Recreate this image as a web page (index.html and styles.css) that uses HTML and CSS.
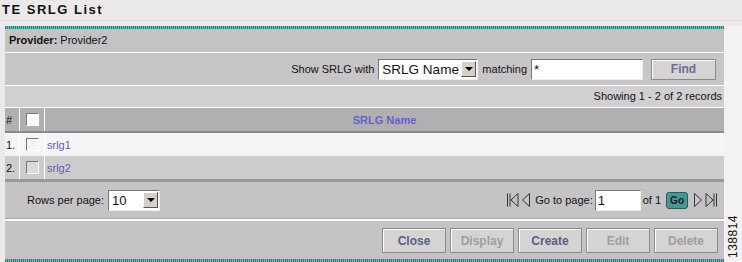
FILE: index.html
```html
<!DOCTYPE html>
<html>
<head>
    <title>TE SRLG List</title>
    <link rel="stylesheet" href="styles.css">
</head>
<body>
    <div class="title">TE SRLG List</div>
    <div class="page">
        <div class="panel">
            <div class="teal"></div>
            <div class="provider"><b>Provider:</b> Provider2</div>
            <div class="filter">
                <span>Show SRLG with</span>
                <span class="select wide"><span class="val">SRLG Name</span><span class="arrow"></span></span>
                <span>matching</span>
                <span class="textbox search">*</span>
                <span class="btn find">Find</span>
            </div>
            <div class="showing">Showing 1 - 2 of 2 records</div>
            <table class="list">
                <tr class="head">
                    <th class="num">#</th>
                    <th class="chk"><span class="box"></span></th>
                    <th class="name">SRLG Name</th>
                </tr>
                <tr class="odd">
                    <td class="num">1.</td>
                    <td class="chk"><span class="box"></span></td>
                    <td><a href="#">srlg1</a></td>
                </tr>
                <tr class="even">
                    <td class="num">2.</td>
                    <td class="chk"><span class="box"></span></td>
                    <td><a href="#">srlg2</a></td>
                </tr>
            </table>
            <div class="pager">
                <div class="rows">
                    <span>Rows per page:</span>
                    <span class="select small"><span class="val">10</span><span class="arrow"></span></span>
                </div>
                <div class="nav">
                    <svg width="13" height="16" viewBox="0 0 13 16"><path d="M1.5 1.5v13M4 1.5v13M12 1.5L5 8l7 6.5z" fill="none" stroke="#333" stroke-width="1"/></svg>
                    <svg width="10" height="16" viewBox="0 0 10 16"><path d="M8.5 1.5L1.5 8l7 6.5z" fill="none" stroke="#333" stroke-width="1"/></svg>
                    <span class="goto">Go to page:</span>
                    <span class="textbox page-in">1</span>
                    <span>of 1</span>
                    <span class="go">Go</span>
                    <svg width="10" height="16" viewBox="0 0 10 16"><path d="M1.5 1.5L8.5 8l-7 6.5z" fill="none" stroke="#333" stroke-width="1"/></svg>
                    <svg width="13" height="16" viewBox="0 0 13 16"><path d="M1 1.5L8 8l-7 6.5zM9 1.5v13M11.5 1.5v13" fill="none" stroke="#333" stroke-width="1"/></svg>
                </div>
            </div>
            <div class="actions">
                <span class="btn on">Close</span>
                <span class="btn off">Display</span>
                <span class="btn on">Create</span>
                <span class="btn off">Edit</span>
                <span class="btn off">Delete</span>
            </div>
            <div class="teal"></div>
        </div>
        <div class="side"><span class="figno">138814</span></div>
    </div>
</body>
</html>
```

FILE: styles.css
```css
body {
    margin: 0;
    background-color: #ece9ea;
    font-family: "Liberation Sans", Arial, sans-serif;
    font-size: 11px;
    color: #111;
}
.title {
    height: 21px;
    padding-left: 2px;
    font-size: 13px;
    font-weight: bold;
    letter-spacing: 1.5px;
    line-height: 20px;
    border-bottom: 1px solid #e2d8d8;
    box-sizing: border-box;
}
.page {
    display: flex;
    padding-left: 5px;
    padding-top: 5px;
}
.panel {
    width: 719px;
    background-color: #c5c3c5;
}
.side {
    flex: 1;
    display: flex;
    align-items: flex-end;
    justify-content: center;
    padding-bottom: 4px;
    background-color: #f3f1f2;
}
.figno {
    writing-mode: vertical-rl;
    transform: rotate(180deg);
    font-size: 12px;
    letter-spacing: 0.5px;
}
.teal {
    height: 3px;
    background: repeating-linear-gradient(90deg, #1f7f78 0 1px, #7fbcb4 1px 2px);
}
.provider {
    height: 23px;
    line-height: 23px;
    padding-left: 4px;
    background-color: #c4c2c4;
    border-bottom: 1px solid #fff;
}
.filter {
    height: 32px;
    display: flex;
    align-items: center;
    justify-content: flex-end;
    gap: 4px;
    padding-right: 8px;
    background-color: #c7c5c7;
    border-bottom: 1px solid #fff;
}
.select {
    display: flex;
    align-items: center;
    height: 21px;
    box-sizing: border-box;
    background: #fff;
    border: 1px solid #777;
    border-right-color: #eee;
    border-bottom-color: #eee;
    padding-left: 3px;
    padding-right: 1px;
    white-space: nowrap;
}
.select .val {
    flex: 1;
    overflow: hidden;
}
.select.wide {
    width: 100px;
    font-size: 13.5px;
}
.select.small {
    width: 52px;
    font-size: 13px;
}
.arrow {
    flex: none;
    width: 15px;
    height: 16px;
    box-sizing: border-box;
    background: #d4d0c8;
    border: 1px solid #fff;
    border-right-color: #555;
    border-bottom-color: #555;
    position: relative;
}
.arrow::after {
    content: "";
    position: absolute;
    left: 3px;
    top: 5px;
    border-left: 4px solid transparent;
    border-right: 4px solid transparent;
    border-top: 4px solid #000;
}
.textbox {
    display: inline-block;
    height: 21px;
    line-height: 19px;
    box-sizing: border-box;
    background: #fff;
    border: 1px solid #777;
    border-right-color: #eee;
    border-bottom-color: #eee;
    padding-left: 2px;
    font-size: 13px;
}
.search {
    width: 112px;
}
.btn {
    display: inline-flex;
    align-items: center;
    justify-content: center;
    box-sizing: border-box;
    background: #d6d4d2;
    border: 1px solid #8a8a8a;
    box-shadow: inset 1px 1px 0 #fff;
    font-weight: bold;
    font-size: 12px;
}
.find {
    width: 65px;
    height: 21px;
    margin-left: 4px;
    color: #6c6c98;
}
.showing {
    height: 21px;
    line-height: 21px;
    text-align: right;
    padding-right: 2px;
    background-color: #d1cfd1;
    border-bottom: 1px solid #fff;
}
.list {
    width: 100%;
    border-collapse: collapse;
}
.list th, .list td {
    padding: 0;
    height: 23px;
    text-align: left;
    font-weight: normal;
}
.list .head th {
    background-color: #b1afb1;
    border-bottom: 2px solid #8c8b8c;
}
.list .num {
    width: 13px;
    padding-left: 1px;
    border-right: 1px solid #fff;
}
.list .chk {
    width: 24px;
    border-right: 1px solid #fff;
}
.list th.name {
    text-align: center;
    font-weight: bold;
    color: #6464c8;
}
.list .odd td {
    background-color: #f6f4f6;
}
.list .even td {
    background-color: #cdcbcd;
}
.list td a {
    color: #6060b0;
    text-decoration: none;
    padding-left: 2px;
}
.box {
    display: block;
    width: 13px;
    height: 13px;
    margin-left: 6px;
    box-sizing: border-box;
    background: #fff;
    border: 1px solid #fff;
    border-top-color: #777;
    border-left-color: #777;
}
.odd .box {
    background: #f6f4f6;
}
.even .box {
    background: #dcdadc;
}
.pager {
    height: 36px;
    display: flex;
    align-items: center;
    justify-content: space-between;
    padding: 0 6px 0 22px;
    border-top: 3px solid #9a999a;
    border-bottom: 1px solid #ababab;
    box-shadow: 0 2px 0 #fff;
    margin-bottom: 3px;
}
.rows, .nav {
    display: flex;
    align-items: center;
    gap: 4px;
}
.nav {
    gap: 2px;
}
.goto {
    margin-left: 2px;
}
.page-in {
    width: 46px;
}
.go {
    display: inline-block;
    margin: 0 3px;
    padding: 2px 3px;
    border-radius: 3px;
    background: #4a9792;
    border: 1px solid #2b5e5a;
    color: #123;
    font-size: 10px;
    font-weight: bold;
}
.actions {
    height: 37px;
    display: flex;
    align-items: center;
    justify-content: flex-end;
    gap: 4px;
    padding-right: 6px;
}
.actions .btn {
    width: 64px;
    height: 25px;
}
.actions .on {
    color: #5c5c8c;
}
.actions .off {
    color: #a09ea0;
}
```
